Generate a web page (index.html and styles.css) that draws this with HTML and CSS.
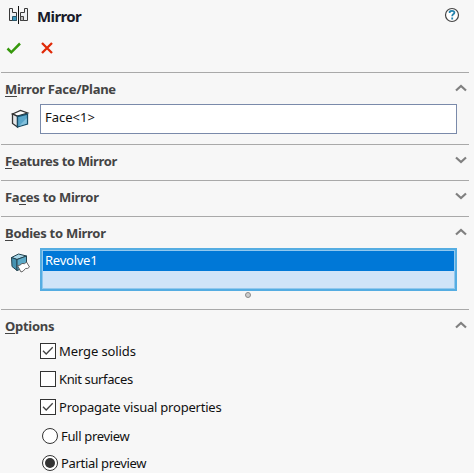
FILE: index.html
```html
<!DOCTYPE html>
<html lang="en">
<head>
<meta charset="utf-8">
<title>Mirror</title>
<link rel="stylesheet" href="styles.css">
</head>
<body>
<main class="panel">
  <header class="header">
    <div class="title-row">
      <svg class="mirror-icon" width="20" height="18" viewBox="0 0 20 18">
        <path d="M.5 2.500h3v4h4v8h-7z" fill="#eef0f2" stroke="#3a3a3a"/>
        <path d="M18.500 2.500h-3v4h-4v8h7z" fill="#eef0f2" stroke="#3a3a3a"/>
        <path d="M3.500 10.500h4v4h-4z" fill="#3c98bd" stroke="#2b5568"/>
        <path d="M11.500 10.500h3v4h-3z" fill="#bbb" stroke="#444"/>
        <path d="M9.500 0v18" stroke="#111"/>
      </svg>
      <h1 class="title">Mirror</h1>
      <svg class="help" width="16" height="16" viewBox="0 0 16 16">
        <circle cx="8" cy="8" r="6.500" fill="#fff" stroke="#444" stroke-width="1.200"/>
        <path d="M5.700 6V4.600Q6.300 3.800 8 3.800Q10.400 3.800 10.400 5.500Q10.400 6.500 9.200 7.300Q8.200 8 8.200 9.200M8.200 10.500v2" fill="none" stroke="#2484ae" stroke-width="1.800"/>
      </svg>
    </div>
    <div class="actions">
      <svg width="16" height="14" viewBox="0 0 16 14"><path d="M1.500 7.500L5.300 11.300L14 2.500" fill="none" stroke="#36980c" stroke-width="2.500"/></svg>
      <svg width="12" height="12" viewBox="0 0 12 12"><path d="M1 1l10 10M11 1L1 11" stroke="#e02a08" stroke-width="2.300"/></svg>
    </div>
  </header>

  <section class="section section-face">
    <div class="section-head"><h2><u>M</u>irror Face/Plane</h2><svg class="chevron" width="12" height="8" viewBox="0 0 12 8"><path d="M1 6.500L6 2L11 6.500"/></svg></div>
    <div class="field-row">
      <svg class="cube" width="20" height="20" viewBox="0 0 20 20">
        <path d="M2.500 5L10.500 1.500L17.500 4L7.500 7z" fill="#fff" stroke="#333" stroke-width="1.300"/>
        <path d="M2.500 5L7.500 7.500V18L2.500 14.500z" fill="#e5e7e9" stroke="#333" stroke-width="1.300"/>
        <path d="M7.500 7.500L17.500 5V15L7.500 18z" fill="#5aa6ca" stroke="#174c66" stroke-width="1.300"/>
        <path d="M9 17L16.800 9V14.500z" fill="#82c0dc"/>
      </svg>
      <div class="list">Face&lt;1&gt;</div>
    </div>
  </section>

  <section class="section">
    <div class="section-head"><h2 class="features"><u>F</u>eatures to Mirror</h2><svg class="chevron" width="12" height="8" viewBox="0 0 12 8"><path d="M1 1.500L6 6L11 1.500"/></svg></div>
  </section>
  <section class="section">
    <div class="section-head"><h2>Fa<u>c</u>es to Mirror</h2><svg class="chevron" width="12" height="8" viewBox="0 0 12 8"><path d="M1 1.500L6 6L11 1.500"/></svg></div>
  </section>

  <section class="section section-bodies">
    <div class="section-head"><h2><u>B</u>odies to Mirror</h2><svg class="chevron" width="12" height="8" viewBox="0 0 12 8"><path d="M1 6.500L6 2L11 6.500"/></svg></div>
    <div class="field-row">
      <svg class="cube" width="20" height="20" viewBox="0 0 20 20">
        <path d="M1.500 4.500L8.500 1L16.500 3L7 6.500z" fill="#a9d8ea" stroke="#24434f"/>
        <path d="M1.500 4.500L7 6.500V17.500L2 13.500z" fill="#4593b2" stroke="#24434f"/>
        <path d="M7 6.500L16.500 3V14L7 17.500z" fill="#5ba9c7" stroke="#24434f"/>
        <path d="M7.500 12.500Q10 13 12 10.500Q15 11.500 16.500 9L19.500 14Q18 16 15.500 15.500Q13 19 11 19z" fill="#fff" stroke="#555" stroke-width=".9"/>
      </svg>
      <div class="list list-active"><div class="item">Revolve1</div></div>
    </div>
    <div class="grip"></div>
  </section>

  <section class="section section-options">
    <div class="section-head"><h2><u>O</u>ptions</h2><svg class="chevron" width="12" height="8" viewBox="0 0 12 8"><path d="M1 6.500L6 2L11 6.500"/></svg></div>
    <div class="options">
      <div class="option"><span class="box"><svg width="14" height="14" viewBox="0 0 14 14"><path d="M2 6.700L5.200 10L11.700 3.300"/></svg></span><span class="merge">Merge solids</span></div>
      <div class="option"><span class="box"></span><span class="knit">Knit surfaces</span></div>
      <div class="option"><span class="box"><svg width="14" height="14" viewBox="0 0 14 14"><path d="M2 6.700L5.200 10L11.700 3.300"/></svg></span><span class="propagate">Propagate visual properties</span></div>
      <div class="option option-radio"><span class="radio"></span><span class="preview">Full preview</span></div>
      <div class="option option-radio"><span class="radio radio-on"></span><span class="preview">Partial preview</span></div>
    </div>
  </section>
</main>
</body>
</html>
```

FILE: styles.css
```css
* { box-sizing: border-box; }
body {
  margin: 0;
  height: 473px;
  overflow: hidden;
  background: #f7f7f7;
  color: #111;
  font: 13px/18px "Noto Sans", "Open Sans", sans-serif;
}
svg { display: block; flex: none; }
.header { height: 72px; padding-top: 6px; }
.title-row { display: flex; height: 20px; align-items: center; padding: 0 14px 0 9px; }
.mirror-icon { align-self: flex-start; margin-right: 8px; }
.title { margin: 0; font-size: 15px; line-height: 20px; font-weight: 700; letter-spacing: -0.6px; color: #1a1a2a; }
.help { margin: -2px 0 0 auto; }
.actions { display: flex; align-items: center; gap: 19px; height: 16px; margin: 14px 0 0 6px; }
.section { height: 36px; margin: 0 5px 0 1px; border-top: 1px solid #a9a9a9; }
.section-face { height: 72px; }
.section-bodies { height: 93px; }
.section-options { height: 164px; }
.section-head { display: flex; justify-content: space-between; height: 31px; padding: 7px 2px 0 4px; }
h2 { margin: 0; font-size: 13px; line-height: 18px; font-weight: 700; letter-spacing: -0.28px; color: #444; }
.features { letter-spacing: -0.37px; }
u { text-decoration: none; box-shadow: inset 0 -1px #444; display: inline-block; height: 17px; }
.chevron { margin-top: 4px; }
.chevron path { fill: none; stroke: #808080; stroke-width: 2.200; }
.field-row { display: flex; padding-left: 9px; }
.cube { margin: 5px 10px 0 0; }
.list { width: 417px; height: 30px; padding: 3px 4px; border: 1px solid #7a8aaa; background: #fff; }
.list-active { height: 43px; padding: 1px; border: 2px solid #55ade2; background: #d0e4f8; box-shadow: inset 0 0 0 1px #92c8ee; }
.item { height: 20px; padding-left: 2px; line-height: 19px; letter-spacing: -0.25px; background: #0078d7; color: #fff; }
.grip { width: 6px; height: 6px; margin: 1px 0 0 244px; border: 1px solid #8b8b8b; border-radius: 50%; background: #ccc; }
.options { padding: 1px 0 0 39px; }
.option { display: flex; align-items: center; gap: 3px; height: 28px; margin: 0; white-space: nowrap; }
.options .option:first-child { height: 18px; margin-bottom: 5px; }
.box { width: 16px; height: 16px; border: 1px solid #333; background: #fff; }
.box path { fill: none; stroke: #444; stroke-width: 1.300; }
.merge { letter-spacing: -0.1px; }
.knit { letter-spacing: -0.38px; }
.propagate { letter-spacing: -0.22px; }
.preview { letter-spacing: -0.33px; }
.option-radio { padding-left: 2px; height: 27px; }
.propagate + .preview, .option:nth-child(4) { height: 29px; }
.option:nth-child(5) { height: 25px; }
.radio { display: grid; place-items: center; width: 16px; height: 16px; border: 1px solid #333; border-radius: 50%; background: #fff; }
.radio-on::after { content: ""; width: 10px; height: 10px; border-radius: 50%; background: #333; }
```
